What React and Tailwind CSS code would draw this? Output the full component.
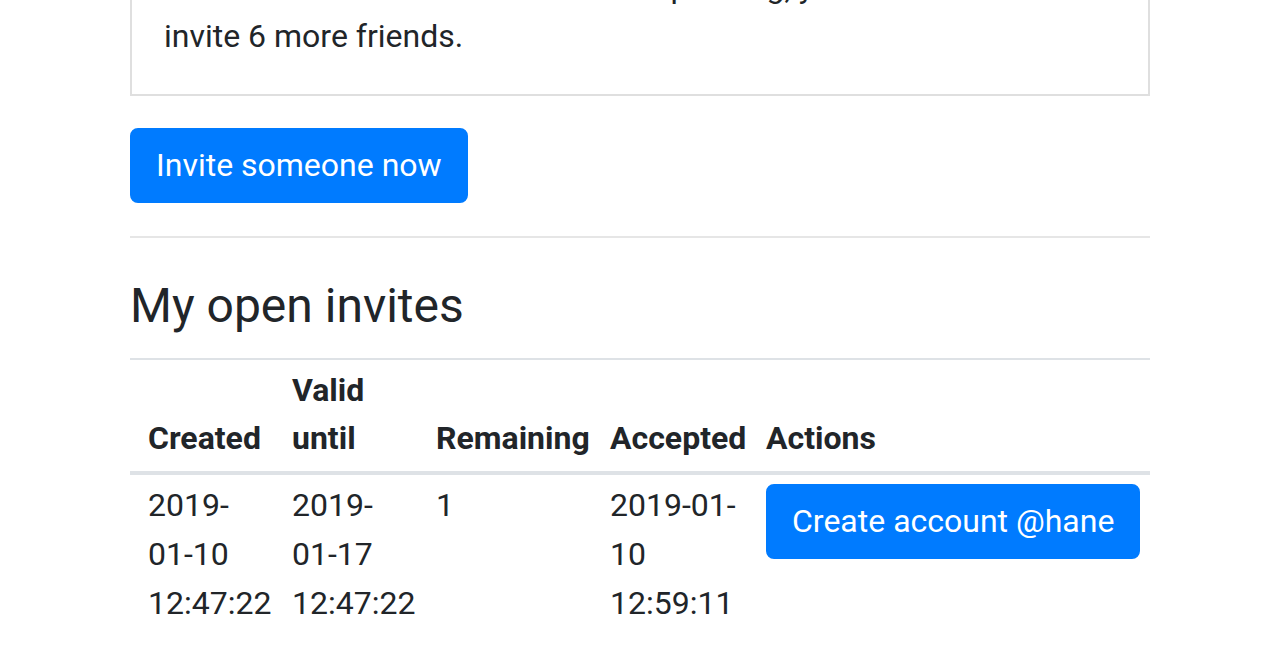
import React from 'react';

const invites = [
  {
    created: '2019-01-10 12:47:22',
    validUntil: '2019-01-17 12:47:22',
    remaining: '1',
    accepted: '2019-01-10 12:59:11',
    action: 'Create account @hane',
  },
];

const splitDate = (value, pattern) => {
  // the reference wraps the dates at the hyphens, differently per column
  if (pattern === 'short') {
    const [y, m, rest] = value.split('-');
    const [d, time] = rest.split(' ');
    return [`${y}-`, `${m}-${d}`, time];
  }
  const [date, time] = value.split(' ');
  const [y, m, d] = date.split('-');
  return [`${y}-${m}-`, d, time];
};

const Lines = ({ lines }) => (
  <>
    {lines.map((line, i) => (
      <div key={i}>{line}</div>
    ))}
  </>
);

const App = () => {
  return (
    <div
      className="min-h-screen bg-white text-[#212529] text-[32px] leading-[49px] overflow-hidden"
      style={{ fontFamily: 'Roboto, "Liberation Sans", sans-serif' }}
    >
      <div className="ml-[130px] w-[1020px] mt-[-71px]">
        <div className="border-2 border-[#dfdfdf] px-[32px] pt-[32px] pb-[33px]">
          You have used 1 invite which is still pending, you can
          <br />
          invite 6 more friends.
        </div>

        <button className="mt-[32px] bg-[#007bff] text-white rounded-[8px] border-2 border-[#007bff] px-[24px] pt-[11px] pb-[12px] leading-[48px]">
          Invite someone now
        </button>

        <hr className="mt-[33px] border-0 border-t-2 border-[#e6e6e6]" />

        <h2 className="mt-[39px] text-[48px] leading-[58px] font-normal">My open invites</h2>

        <table className="mt-[23px] w-full table-fixed border-collapse text-left">
          <colgroup>
            <col className="w-[152px]" />
            <col className="w-[144px]" />
            <col className="w-[174px]" />
            <col className="w-[156px]" />
            <col className="w-[394px]" />
          </colgroup>
          <thead>
            <tr className="border-t-2 border-[#dee2e6] leading-[48px]">
              <th className="align-bottom font-bold pl-[18px] pr-[10px] pt-[6px] pb-[9px] border-b-4 border-[#dee2e6]">
                Created
              </th>
              <th className="align-bottom font-bold px-[10px] pt-[6px] pb-[9px] border-b-4 border-[#dee2e6]">
                Valid
                <br />
                until
              </th>
              <th className="align-bottom font-bold px-[10px] pt-[6px] pb-[9px] border-b-4 border-[#dee2e6]">
                Remaining
              </th>
              <th className="align-bottom font-bold px-[10px] pt-[6px] pb-[9px] border-b-4 border-[#dee2e6]">
                Accepted
              </th>
              <th className="align-bottom font-bold px-[10px] pt-[6px] pb-[9px] border-b-4 border-[#dee2e6]">
                Actions
              </th>
            </tr>
          </thead>
          <tbody>
            {invites.map((row) => (
              <tr key={row.created}>
                <td className="align-top pl-[18px] pr-[10px] pt-[6px] pb-[8px]">
                  <Lines lines={splitDate(row.created, 'short')} />
                </td>
                <td className="align-top px-[10px] pt-[6px] pb-[8px]">
                  <Lines lines={splitDate(row.validUntil, 'short')} />
                </td>
                <td className="align-top px-[10px] pt-[6px] pb-[8px]">{row.remaining}</td>
                <td className="align-top px-[10px] pt-[6px] pb-[8px]">
                  <Lines lines={splitDate(row.accepted, 'long')} />
                </td>
                <td className="align-top px-[10px] pt-[9px] pb-[8px]">
                  <button className="bg-[#007bff] text-white rounded-[8px] border-2 border-[#007bff] px-[24px] pt-[11px] pb-[12px] leading-[48px] whitespace-nowrap">
                    {row.action}
                  </button>
                </td>
              </tr>
            ))}
          </tbody>
        </table>
      </div>
    </div>
  );
};

export default App;
